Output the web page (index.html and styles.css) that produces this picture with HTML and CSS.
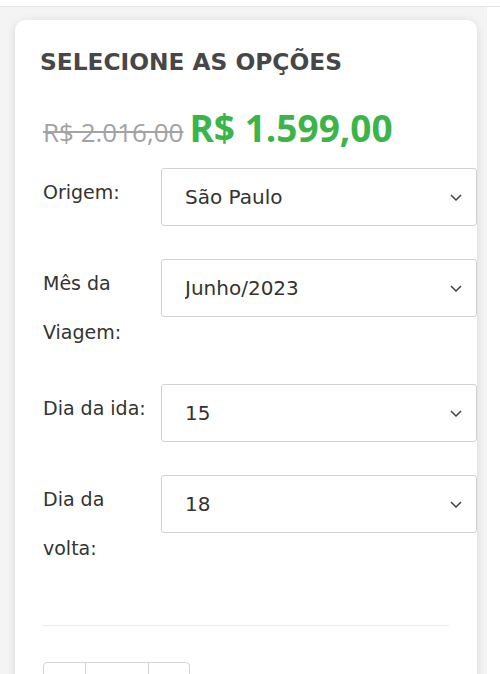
FILE: index.html
```html
<!DOCTYPE html>
<html>

<head>
    <meta name="viewport" content="width=device-width,initial-scale=1.0">
    <title>Selecione as opções</title>
    <link rel="stylesheet" href="styles.css">
</head>

<body>
    <div class="topbar"></div>

    <div class="page">
        <div class="card">
            <h3 class="card-title">SELECIONE AS OPÇÕES</h3>

            <div class="price">
                <del>R$ 2.016,00</del>
                <ins>R$ 1.599,00</ins>
            </div>

            <form class="variations">
                <div class="row">
                    <label for="origem">Origem:</label>
                    <div class="select-wrap">
                        <select id="origem">
                            <option>São Paulo</option>
                        </select>
                        <svg class="chevron" viewBox="0 0 12 7"><path d="M1 1l5 5 5-5" /></svg>
                    </div>
                </div>

                <div class="row">
                    <label for="mes">Mês da Viagem:</label>
                    <div class="select-wrap">
                        <select id="mes">
                            <option>Junho/2023</option>
                        </select>
                        <svg class="chevron" viewBox="0 0 12 7"><path d="M1 1l5 5 5-5" /></svg>
                    </div>
                </div>

                <div class="row">
                    <label for="ida">Dia da ida:</label>
                    <div class="select-wrap">
                        <select id="ida">
                            <option>15</option>
                        </select>
                        <svg class="chevron" viewBox="0 0 12 7"><path d="M1 1l5 5 5-5" /></svg>
                    </div>
                </div>

                <div class="row">
                    <label for="volta">Dia da volta:</label>
                    <div class="select-wrap">
                        <select id="volta">
                            <option>18</option>
                        </select>
                        <svg class="chevron" viewBox="0 0 12 7"><path d="M1 1l5 5 5-5" /></svg>
                    </div>
                </div>
            </form>

            <hr class="divider">

            <div class="qty">
                <span class="qty-minus"></span>
                <span class="qty-value"></span>
                <span class="qty-plus"></span>
            </div>
        </div>
    </div>
</body>

</html>
```

FILE: styles.css
```css
body {
    margin: 0;
    background: #fff;
    font-family: "DejaVu Sans", sans-serif;
    color: #333;
}

.topbar {
    height: 6px;
    border-bottom: 1px solid #e4e4e4;
}

.page {
    width: 487px;
    min-height: 667px;
    box-sizing: border-box;
    background: #f5f4f5;
    padding: 13px 0 0 15px;
}

.card {
    width: 462px;
    box-sizing: border-box;
    background: #fff;
    border-radius: 10px;
    box-shadow: 0 2px 10px rgba(0, 0, 0, 0.12);
    padding: 28px 28px 40px 28px;
}

.card-title {
    margin: 0 0 0 -3px;
    font-size: 23.3px;
    font-weight: bold;
    color: #474747;
}

.price {
    display: flex;
    align-items: baseline;
    gap: 6px;
    margin-top: 31px;
    font-family: "Open Sans", sans-serif;
    line-height: 44px;
}

.price del {
    font-size: 26px;
    color: #a3a3a3;
}

.price ins {
    text-decoration: none;
    font-size: 37px;
    font-weight: bold;
    color: #3bb54a;
}

.variations {
    margin-top: 14px;
}

.row {
    display: flex;
    align-items: flex-start;
}

.row label {
    width: 118px;
    flex-shrink: 0;
    font-size: 19px;
    line-height: 49px;
    padding-bottom: 27px;
}

.select-wrap {
    position: relative;
    width: 316px;
    flex-shrink: 0;
    margin-bottom: 33px;
}

.select-wrap select {
    appearance: none;
    -webkit-appearance: none;
    display: block;
    width: 100%;
    height: 58px;
    box-sizing: border-box;
    border: 1px solid #d2d2d2;
    border-radius: 3px;
    background: #fff;
    padding: 0 40px 0 23px;
    font-family: "DejaVu Sans", sans-serif;
    font-size: 20px;
    color: #333;
}

.chevron {
    position: absolute;
    right: 15px;
    top: 26px;
    width: 12px;
    height: 7px;
    fill: none;
    stroke: #444;
    stroke-width: 1.5;
}

.divider {
    border: none;
    border-top: 1px solid #ececec;
    margin: 25px 0 36px 0;
}

.qty {
    display: flex;
    width: fit-content;
    height: 46px;
    border: 1px solid #d5d5d5;
    border-radius: 4px;
}

.qty span {
    display: block;
}

.qty-minus {
    width: 41px;
    border-right: 1px solid #d5d5d5;
}

.qty-value {
    width: 62px;
    border-right: 1px solid #d5d5d5;
}

.qty-plus {
    width: 40px;
}
```
